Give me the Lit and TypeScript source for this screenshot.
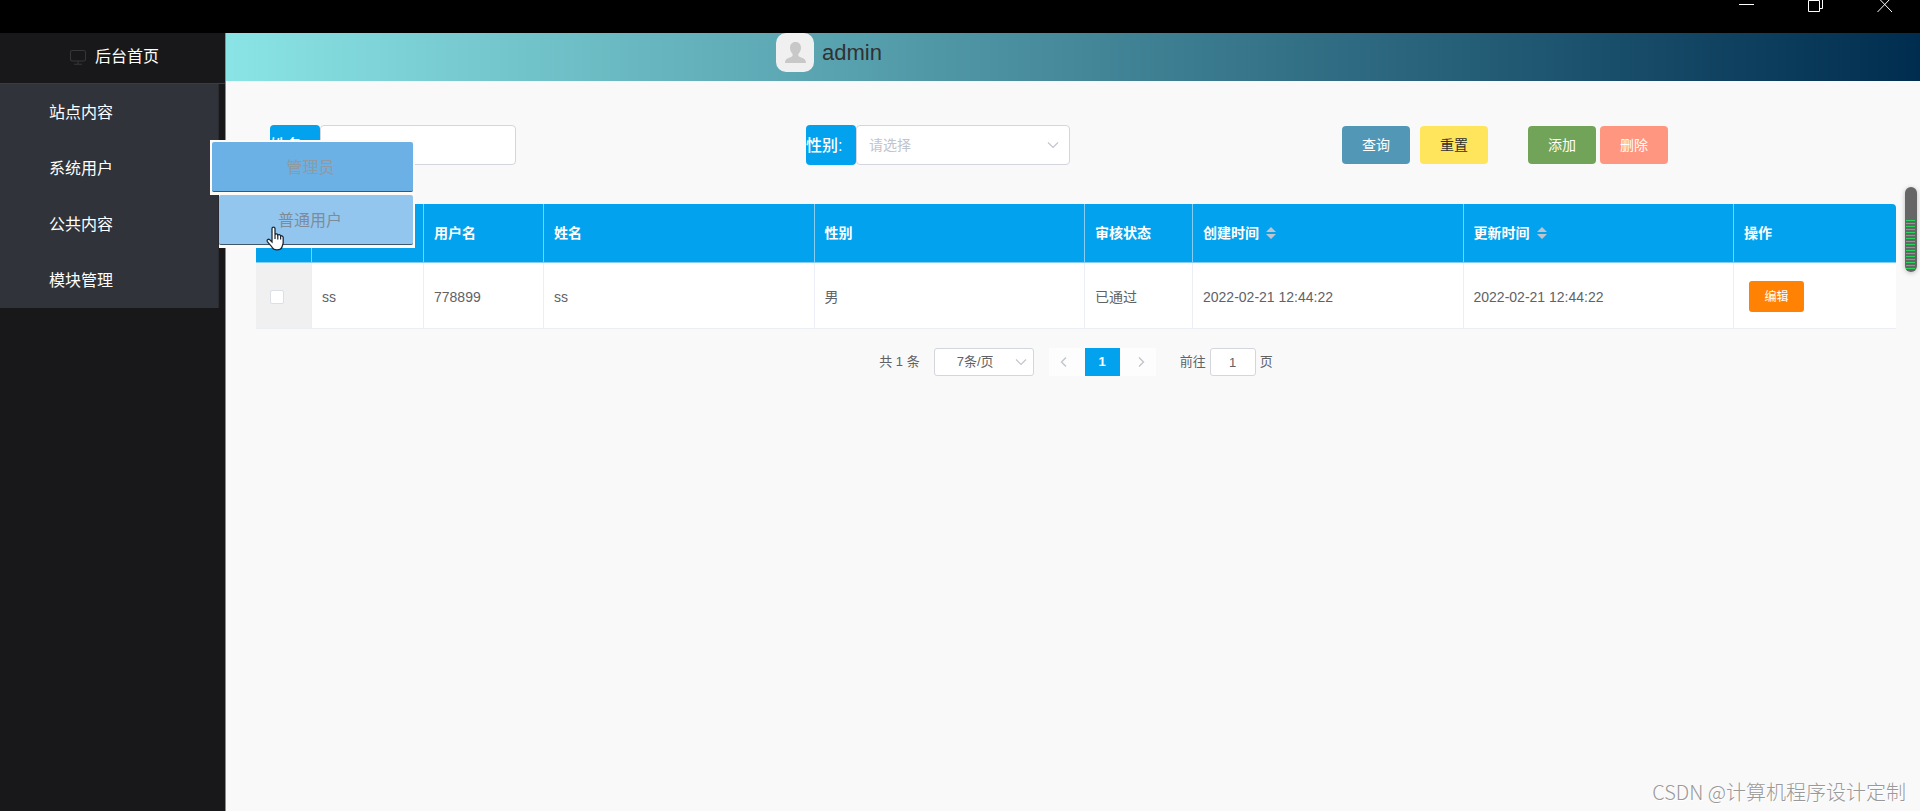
import { LitElement, html, css, svg } from "lit";
import { customElement } from "lit/decorators.js";

const chevronDown = html`<svg class="chevron" viewBox="0 0 12 12" aria-hidden="true">
  <path d="M1 3.5 L6 8.5 L11 3.5" fill="none" stroke="currentColor" stroke-width="1.1" />
</svg>`;

const sortCaret = html`<svg class="sort" viewBox="0 0 10 12" aria-hidden="true">
  <path d="M5 0 L10 5 H0 Z M0 7 H10 L5 12 Z" fill="#c0c4cc" />
</svg>`;

const fields = [
  { label: "姓名", cls: "narrow" },
  { label: "用户名", cls: "account" },
  { label: "姓名", cls: "" },
  { label: "性别", cls: "" },
  { label: "审核状态", cls: "state" },
  { label: "创建时间", cls: "", sortable: true },
  { label: "更新时间", cls: "", sortable: true },
  { label: "操作", cls: "ops" },
];

const rows = [["ss", "778899", "ss", "男", "已通过", "2022-02-21 12:44:22", "2022-02-21 12:44:22"]];

@customElement("app-root")
export class AppRoot extends LitElement {
  static styles = css`
    :host {
      display: flex;
      flex-direction: column;
      min-height: 100vh;
      position: relative;
      overflow: hidden;
      background: #f9f9f9;
      color: #606266;
      font: 14px/20px "Liberation Sans", "Noto Sans CJK SC", sans-serif;
    }
    * { box-sizing: border-box; }
    button, input, select { font: inherit; color: inherit; margin: 0; }
    button { cursor: pointer; border: 0; padding: 0; }
    a { color: inherit; text-decoration: none; }
    ul { list-style: none; margin: 0; padding: 0; }

    .titlebar {
      display: flex;
      justify-content: flex-end;
      height: 33px;
      padding-right: 1px;
      background: #000;
    }
    .win { width: 69px; height: 14px; background: none; display: grid; justify-items: center; }
    .win svg { width: 16px; height: 14px; display: block; }

    .body { flex: 1; display: flex; }
    .side {
      width: 226px;
      flex: none;
      background: #18181a;
      border-right: 1px solid #8c8c8c;
      color: #fff;
      font-size: 16px;
    }
    .home {
      display: flex;
      align-items: center;
      gap: 8px;
      height: 51px;
      padding: 0 0 2px 69px;
      border-bottom: 1px solid #3a3d42;
    }
    .home svg { width: 18px; height: 18px; }
    .menu { width: 219px; background: #30333a; border-right: 1px solid #292b30; }
    .item { position: relative; }
    .item > a { display: block; line-height: 54px; padding: 2px 0 0 49px; }

    .flyout { position: absolute; z-index: 5; top: 0; left: 210px; width: 205px; color: #8f9aa3; }
    .fly { background: #fffaf6; padding: 2px 2px 3px 2px; }
    .fly a {
      display: block;
      height: 50px;
      line-height: 48px;
      padding: 2px 4px 0 0;
      text-align: center;
      border-bottom: 1px solid #40566a;
      border-radius: 2px;
      background: #6bb1e6;
    }
    .fly.hover { margin-left: 9px; padding: 0 2px 3px 0; }
    .fly.hover a { background: #93c6ef; padding-right: 12px; color: #7f8c98; }
    .pointer { position: absolute; top: 86px; left: 55px; width: 21px; height: 26px; }

    .main { flex: 1; min-width: 0; }
    .top {
      display: flex;
      align-items: flex-start;
      gap: 8px;
      height: 48px;
      padding-left: 550px;
      background: linear-gradient(90deg, #8ae4e5, #002d4f);
      color: #303133;
      font-size: 22px;
      line-height: 40px;
    }
    .avatar { width: 38px; height: 39px; border-radius: 10px; background: #f0f0f0; display: block; }

    .content { padding: 44px 24px 0 30px; }
    .filters { display: grid; grid-template-columns: repeat(3, 1fr); padding: 0 18px 0 14px; height: 40px; }
    .field { display: flex; }
    .field label {
      width: 50px;
      border-radius: 4px;
      background: #03a2ee;
      color: #fff;
      font-size: 16px;
      font-weight: 500;
      line-height: 38px;
      padding-top: 2px;
      white-space: nowrap;
    }
    .box {
      height: 40px;
      border: 1px solid #d3d6dc;
      border-radius: 4px;
      background: #fff;
      padding: 0 10px 0 12px;
      outline: none;
      appearance: none;
    }
    input.box { width: 196px; }
    .pick { position: relative; width: 214px; color: #c0c4cc; }
    .pick .box { width: 100%; }
    .chevron { position: absolute; right: 11px; top: 50%; margin-top: -6px; width: 12px; height: 12px; color: #c0c4cc; pointer-events: none; }
    .actions { display: flex; align-items: center; }
    .btn { width: 68px; height: 38px; border-radius: 4px; color: #fff; }
    .query { background: #5397b6; margin-right: 10px; }
    .reset { background: #ffe55b; color: #303133; margin-right: 40px; }
    .add { background: #71a459; margin-right: 4px; }
    .del { background: #ff967f; }

    table { width: 100%; margin-top: 39px; table-layout: fixed; border-collapse: separate; border-spacing: 0; }
    th, td { text-align: left; padding: 0 10px; border-right: 1px solid #ebeef5; border-bottom: 1px solid #ebeef5; white-space: nowrap; }
    th { height: 59px; background: #03a2ee; color: #fff; font-weight: 700; border-color: #84cdf3; }
    td { height: 66px; padding-top: 2px; background: #fff; }
    th:last-child, td:last-child { border-right: 0; }
    th:last-child { border-top-right-radius: 4px; }
    .check { width: 56px; padding-left: 14px; }
    td.check { background: #f0f0f0; }
    .narrow { width: 112px; }
    .account { width: 120px; }
    .state { width: 108px; }
    .ops { width: 162px; }
    td.ops { padding-left: 15px; }
    .tick { appearance: none; display: block; width: 14px; height: 14px; border: 1px solid #dcdfe6; border-radius: 2px; background: #fff; }
    .sort { width: 10px; height: 12px; margin-left: 7px; vertical-align: -1px; }
    .edit { display: block; width: 55px; height: 31px; border-radius: 3px; background: #ff8205; color: #fff; font-size: 12px; }

    .pager { display: flex; justify-content: center; align-items: center; margin-top: 19px; font-size: 13px; height: 28px; }
    .pager .pick { width: 100px; margin: 0 15px 0 14px; color: #606266; }
    .pager .box { height: 28px; border-radius: 3px; padding: 0 16px 0 22px; display: block; }
    .pager .chevron { right: 7px; }
    .pg { width: 36px; height: 28px; background: #fdfdfd; color: #c0c4cc; display: grid; place-items: center; }
    .pg svg { width: 12px; height: 12px; }
    .pg.prev { padding-right: 6px; }
    .pg.next { padding-left: 6px; }
    .pg.on { width: 35px; background: #03a2ee; color: #fff; font-weight: 700; }
    .pager .goto { margin-left: 24px; }
    .pager input.box { width: 46px; padding: 0; text-align: center; margin: 0 4px; }

    .meter {
      position: absolute;
      z-index: 4;
      right: 3px;
      top: 187px;
      width: 12px;
      height: 85px;
      border-radius: 6px;
      background: #666;
      box-shadow: 0 1px 5px rgba(0, 0, 0, 0.25);
      overflow: hidden;
      padding: 33px 2px 2px 1px;
    }
    .meter span { display: block; height: 50px; background: repeating-linear-gradient(#28d45c 0 1px, #666 1px 3px); }
    .mark {
      position: absolute;
      right: 14px;
      bottom: 5px;
      font: 300 20px/28px "Noto Sans CJK SC", sans-serif;
      color: #999;
      text-shadow: 1px 1px 0 #fff;
    }
  `;

  private item(label: string, flyout: unknown = "") {
    return html`<li class="item"><a href="#">${label}</a>${flyout}</li>`;
  }

  render() {
    return html`
      <header class="titlebar">
        <button class="win" aria-label="minimize"><svg viewBox="0 0 16 14">${svg`<path d="M0 4.5H15" stroke="#fff" />`}</svg></button>
        <button class="win" aria-label="restore"><svg viewBox="0 0 16 14">${svg`<path d="M.5 .5H11.5V11.5H.5ZM11 8.5H14.5V0" fill="none" stroke="#fff" />`}</svg></button>
        <button class="win" aria-label="close"><svg viewBox="0 0 16 14">${svg`<path d="M.5 -3L15 12M15 -3L.5 12" stroke="#fff" />`}</svg></button>
      </header>
      <div class="body">
        <nav class="side">
          <a class="home" href="#">
            <svg viewBox="0 0 18 18" fill="none" stroke="#34363a" stroke-width="1.1" aria-hidden="true">
              <rect x="1.5" y="2.5" width="15" height="10.5" rx="1.8" /><path d="M9 13v3M5 16.2h8" />
            </svg>
            <span>后台首页</span>
          </a>
          <ul class="menu">
            ${this.item("站点内容")}
            ${this.item("系统用户", html`<div class="flyout">
              <div class="fly"><a href="#">管理员</a></div>
              <div class="fly hover"><a href="#">普通用户</a></div>
              <svg class="pointer" viewBox="0 0 21 26" aria-hidden="true">
                <path d="M7 2.6C7 .6 10 .6 10 2.6V8.6C10.6 7.4 12.6 7.8 12.8 9.2C13.6 8.2 15.4 8.7 15.6 10C16.6 9.4 18.2 10 18.2 11.6V16.4C18.2 18.6 17 20 16.8 21.6C15.6 24.6 8.6 24.6 7.4 21.8C6.6 20 3.4 17.4 2.2 15.2C1.6 13.6 3.4 12.6 4.8 13.8L7 16Z" fill="#fff" stroke="#1c2733" stroke-width="1.3" />
                <path d="M10 8.6V13M12.8 9.2V13.4M15.6 10V13.6" stroke="#1c2733" stroke-width="1.2" />
              </svg>
            </div>`)}
            ${this.item("公共内容")}
            ${this.item("模块管理")}
          </ul>
        </nav>
        <main class="main">
          <div class="top">
            <svg class="avatar" viewBox="0 0 38 39" aria-hidden="true">
              <path d="M19.5 9C23.2 9 25 11.6 25 15C25 18 23.4 19.6 22.4 21C22 22.6 22.6 23.4 24 24C27.6 25.2 30 26.2 30 30H9C9 26.2 11.4 25.2 15 24C16.4 23.4 17 22.6 16.6 21C15.6 19.6 14 18 14 15C14 11.6 15.8 9 19.5 9Z" fill="#c8c8c8" />
            </svg>
            <span>admin</span>
          </div>
          <div class="content">
            <form class="filters" @submit=${(e: Event) => e.preventDefault()}>
              <div class="field"><label for="name">姓名:</label><input id="name" class="box" type="text" /></div>
              <div class="field">
                <label for="sex">性别:</label>
                <span class="pick">
                  <select id="sex" class="box"><option>请选择</option><option>男</option><option>女</option></select>${chevronDown}
                </span>
              </div>
              <div class="actions">
                <button class="btn query">查询</button><button class="btn reset" type="reset">重置</button>
                <button class="btn add" type="button">添加</button><button class="btn del" type="button">删除</button>
              </div>
            </form>
            <table>
              <thead>
                <tr>
                  <th class="check"><input class="tick" type="checkbox" aria-label="全选" /></th>
                  ${fields.map((f) => html`<th class=${f.cls}>${f.label}${f.sortable ? sortCaret : ""}</th>`)}
                </tr>
              </thead>
              <tbody>
                ${rows.map((r) => html`<tr>
                  <td class="check"><input class="tick" type="checkbox" aria-label="选择" /></td>
                  ${r.map((v) => html`<td>${v}</td>`)}
                  <td class="ops"><button class="edit">编辑</button></td>
                </tr>`)}
              </tbody>
            </table>
            <div class="pager">
              <span>共 1 条</span>
              <span class="pick"><select class="box" aria-label="每页条数"><option>7条/页</option></select>${chevronDown}</span>
              <button class="pg prev" aria-label="上一页"><svg viewBox="0 0 12 12"><path d="M8 1.5L3.5 6L8 10.5" fill="none" stroke="currentColor" stroke-width="1.4" /></svg></button>
              <button class="pg on">1</button>
              <button class="pg next" aria-label="下一页"><svg viewBox="0 0 12 12"><path d="M4 1.5L8.5 6L4 10.5" fill="none" stroke="currentColor" stroke-width="1.4" /></svg></button>
              <label class="goto" for="page">前往</label><input id="page" class="box" type="text" .value=${"1"} /><span>页</span>
            </div>
          </div>
        </main>
      </div>
      <div class="meter"><span></span></div>
      <div class="mark">CSDN @计算机程序设计定制</div>
    `;
  }
}
